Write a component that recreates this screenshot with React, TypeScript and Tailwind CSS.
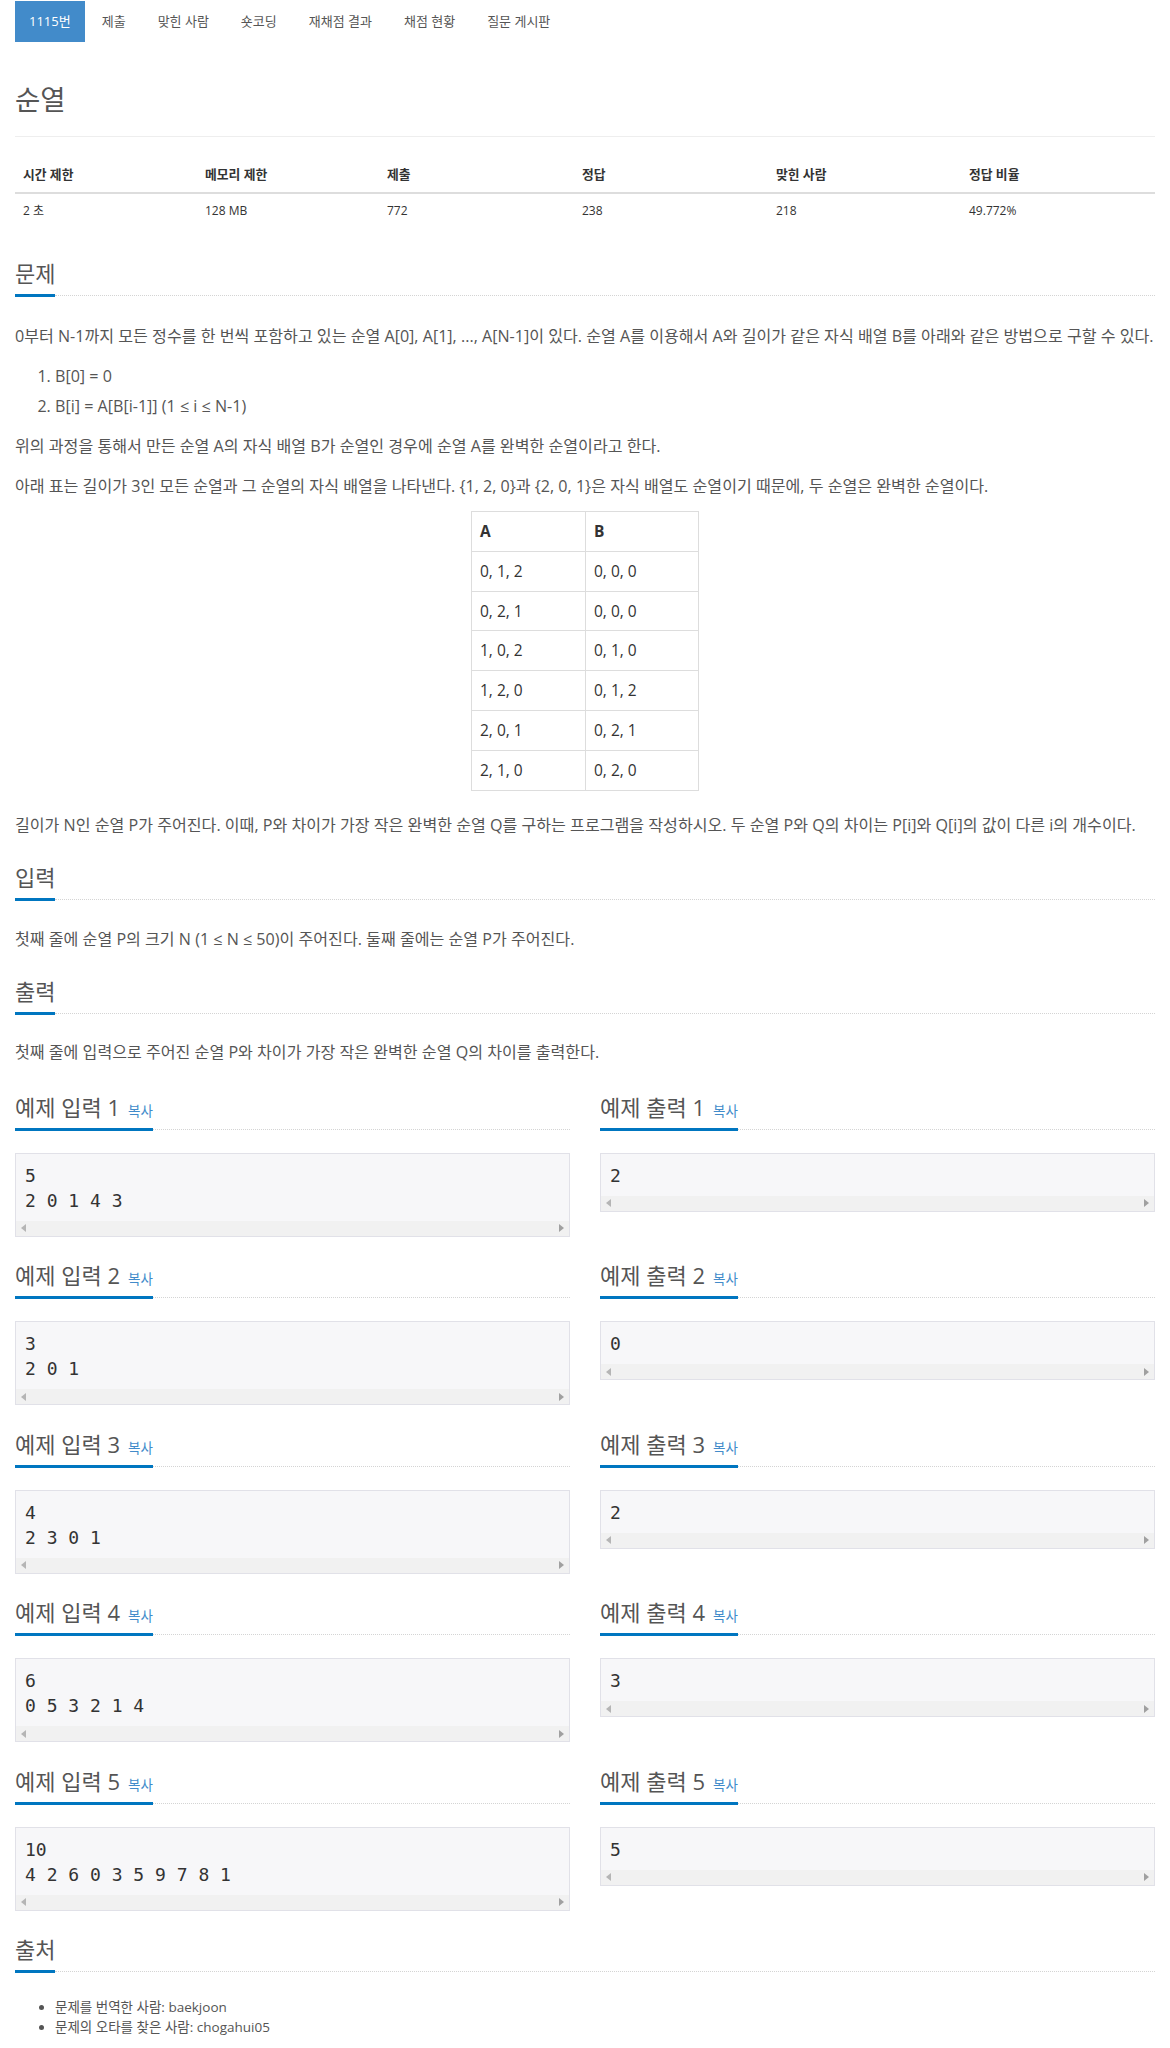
import React from "react";

const navItems = ["1115번", "제출", "맞힌 사람", "숏코딩", "재채점 결과", "채점 현황", "질문 게시판"];

const samples = [
  { input: "5\n2 0 1 4 3", output: "2" },
  { input: "3\n2 0 1", output: "0" },
  { input: "4\n2 3 0 1", output: "2" },
  { input: "6\n0 5 3 2 1 4", output: "3" },
  { input: "10\n4 2 6 0 3 5 9 7 8 1", output: "5" },
];

const permTable = [
  ["0, 1, 2", "0, 0, 0"],
  ["0, 2, 1", "0, 0, 0"],
  ["1, 0, 2", "0, 1, 0"],
  ["1, 2, 0", "0, 1, 2"],
  ["2, 0, 1", "0, 2, 1"],
  ["2, 1, 0", "0, 2, 0"],
];

function Headline({ title, copy }: { title: string; copy?: boolean }) {
  return (
    <div className="flex items-end">
      <div className="flex items-baseline border-b-[3px] border-[#0076c0] pb-[7px]">
        <span className="text-[22px] leading-[28px] text-[#555]">{title}</span>
        {copy && <span className="ml-[8px] text-[13.5px] leading-[16px] text-[#428bca]">복사</span>}
      </div>
      <div className="mb-[1px] flex-1 border-b border-dotted border-[#d4d4d4]"></div>
    </div>
  );
}

function Arrow({ dir }: { dir: "left" | "right" }) {
  return (
    <svg width="5" height="8" viewBox="0 0 5 8">
      {dir === "left" ? (
        <polygon points="5,0 5,8 0,4" fill="#b5b5b5" />
      ) : (
        <polygon points="0,0 0,8 5,4" fill="#a0a0a0" />
      )}
    </svg>
  );
}

function Pre({ text }: { text: string }) {
  return (
    <div className="border border-[#e1e1e8] bg-[#f7f7f9]">
      <pre className="m-0 whitespace-pre px-[9px] pb-[8px] pt-[9px] font-['DejaVu_Sans_Mono',monospace] text-[18px] leading-[25px] text-[#333]">
        {text}
      </pre>
      <div className="flex h-[15px] items-center justify-between bg-[#f1f1f1] px-[5px]">
        <Arrow dir="left" />
        <Arrow dir="right" />
      </div>
    </div>
  );
}

export default function App() {
  const infoHead = ["시간 제한", "메모리 제한", "제출", "정답", "맞힌 사람", "정답 비율"];
  const infoData = ["2 초", "128 MB", "772", "238", "218", "49.772%"];
  const widths = ["w-[182px]", "w-[182px]", "w-[195px]", "w-[194px]", "w-[193px]", "w-[194px]"];

  return (
    <div className="w-[1170px] bg-white px-[15px] pb-[20px] font-['Open_Sans','Noto_Sans_CJK_KR',sans-serif] text-[#555]">
      {/* nav */}
      <ul className="mt-[1px] flex">
        {navItems.map((n, i) => (
          <li
            key={n}
            className={
              i === 0
                ? "flex h-[41px] items-center bg-[#428bca] px-[14px] text-[13px] text-white"
                : "ml-[2px] flex h-[41px] items-center px-[15px] text-[13px] text-[#555]"
            }
          >
            {n}
          </li>
        ))}
      </ul>

      {/* title */}
      <div className="border-b border-[#eee] pb-[18px] pt-[40px]">
        <h1 className="text-[27.5px] leading-[36px] text-[#555]">순열</h1>
      </div>

      {/* info table */}
      <table className="mt-[19px] w-full border-collapse text-[12px] text-[#333]">
        <thead>
          <tr>
            {infoHead.map((h, i) => (
              <th key={h} className={`${widths[i]} border-b-2 border-[#ddd] px-[8px] py-[8px] text-left text-[12.8px] font-bold leading-[20px]`}>
                {h}
              </th>
            ))}
          </tr>
        </thead>
        <tbody>
          <tr>
            {infoData.map((d) => (
              <td key={d} className="px-[8px] pb-[8px] pt-[7px] leading-[20px]">
                {d}
              </td>
            ))}
          </tr>
        </tbody>
      </table>

      {/* 문제 */}
      <div className="mt-[30px]">
        <Headline title="문제" />
      </div>
      <div className="mt-[24px] text-[16.1px] leading-[30px] text-[#555]">
        <p className="mb-[10px] whitespace-nowrap">
          0부터 N-1까지 모든 정수를 한 번씩 포함하고 있는 순열 A[0], A[1], ..., A[N-1]이 있다. 순열 A를 이용해서 A와 길이가 같은 자식 배열 B를 아래와 같은 방법으로 구할 수 있다.
        </p>
        <ol className="mb-[10px] list-decimal pl-[40px]">
          <li>B[0] = 0</li>
          <li>B[i] = A[B[i-1]] (1 ≤ i ≤ N-1)</li>
        </ol>
        <p className="mb-[10px] whitespace-nowrap">
          위의 과정을 통해서 만든 순열 A의 자식 배열 B가 순열인 경우에 순열 A를 완벽한 순열이라고 한다.
        </p>
        <p className="mb-[10px] whitespace-nowrap">
          아래 표는 길이가 3인 모든 순열과 그 순열의 자식 배열을 나타낸다. {"{1, 2, 0}"}과 {"{2, 0, 1}"}은 자식 배열도 순열이기 때문에, 두 순열은 완벽한 순열이다.
        </p>
        <table className="mx-auto mb-[19.4px] border-collapse text-[15.5px] text-[#333]">
          <thead>
            <tr>
              <th className="w-[114px] border border-[#ddd] px-[8px] py-[8px] text-left font-bold leading-[22.8px]">A</th>
              <th className="w-[113px] border border-[#ddd] px-[8px] py-[8px] text-left font-bold leading-[22.8px]">B</th>
            </tr>
          </thead>
          <tbody>
            {permTable.map((r) => (
              <tr key={r[0]}>
                <td className="border border-[#ddd] px-[8px] py-[8px] leading-[22.8px]">{r[0]}</td>
                <td className="border border-[#ddd] px-[8px] py-[8px] leading-[22.8px]">{r[1]}</td>
              </tr>
            ))}
          </tbody>
        </table>
        <p className="whitespace-nowrap">
          길이가 N인 순열 P가 주어진다. 이때, P와 차이가 가장 작은 완벽한 순열 Q를 구하는 프로그램을 작성하시오. 두 순열 P와 Q의 차이는 P[i]와 Q[i]의 값이 다른 i의 개수이다.
        </p>
      </div>

      {/* 입력 */}
      <div className="mt-[23px]">
        <Headline title="입력" />
      </div>
      <p className="mt-[23px] text-[16.1px] leading-[30px] text-[#555]">
        첫째 줄에 순열 P의 크기 N (1 ≤ N ≤ 50)이 주어진다. 둘째 줄에는 순열 P가 주어진다.
      </p>

      {/* 출력 */}
      <div className="mt-[23px]">
        <Headline title="출력" />
      </div>
      <p className="mt-[22px] text-[16.1px] leading-[30px] text-[#555]">
        첫째 줄에 입력으로 주어진 순열 P와 차이가 가장 작은 완벽한 순열 Q의 차이를 출력한다.
      </p>

      {/* samples */}
      <div className="mt-[26px]">
        {samples.map((s, i) => (
          <div key={i} className="grid grid-cols-2 gap-x-[30px] pb-[24.5px]">
            <div>
              <Headline title={`예제 입력 ${i + 1}`} copy />
              <div className="mt-[22px]">
                <Pre text={s.input} />
              </div>
            </div>
            <div>
              <Headline title={`예제 출력 ${i + 1}`} copy />
              <div className="mt-[22px]">
                <Pre text={s.output} />
              </div>
            </div>
          </div>
        ))}
      </div>

      {/* 출처 */}
      <div>
        <Headline title="출처" />
      </div>
      <ul className="mt-[24px] list-disc pl-[40px] text-[13.5px] leading-[20px] text-[#555]">
        <li>문제를 번역한 사람: baekjoon</li>
        <li>문제의 오타를 찾은 사람: chogahui05</li>
      </ul>
    </div>
  );
}
